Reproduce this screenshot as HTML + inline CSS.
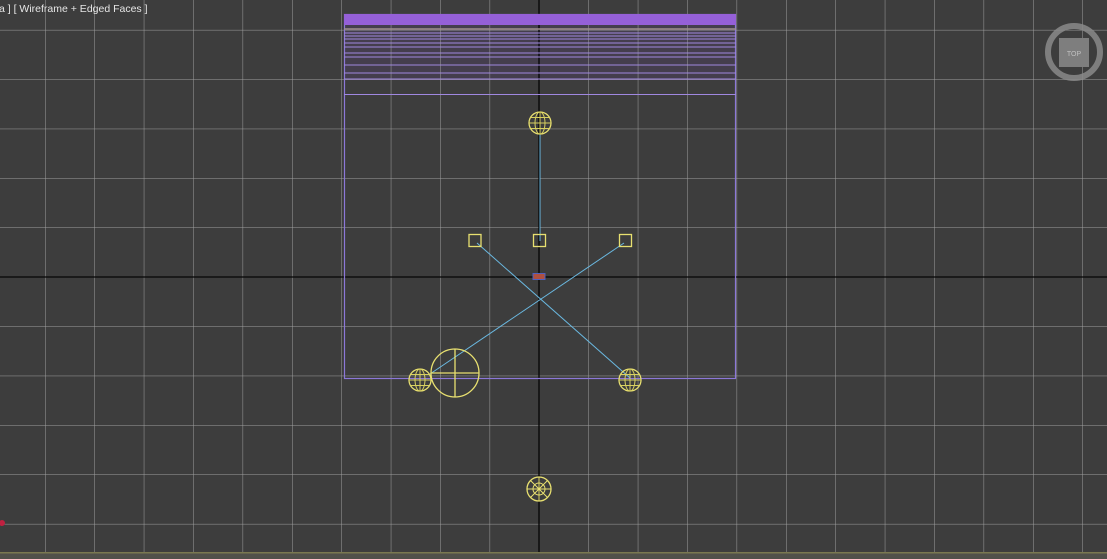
<!DOCTYPE html>
<html><head><style>
html,body{margin:0;padding:0;background:#3c3c3c;overflow:hidden;}
svg{display:block}
text{font-family:"Liberation Sans",sans-serif}
</style></head><body>
<svg width="1107" height="559" viewBox="0 0 1107 559" xmlns="http://www.w3.org/2000/svg">
<defs>
<pattern id="g" x="45" y="29.9" width="49.4" height="49.4" patternUnits="userSpaceOnUse">
<path d="M0 0V49.4M0 0H49.4" stroke="#a0a0a0" stroke-width="1" fill="none"/>
</pattern>
<g id="sph">
<circle r="11" fill="none" stroke="#e8e070" stroke-width="1.3"/>
<ellipse rx="5" ry="11" fill="none" stroke="#d8d060" stroke-width="1"/>
<path d="M0 -11V11M-11 0H11M-9.5 -5.5H9.5M-9.5 5.5H9.5" stroke="#d8d060" stroke-width="1"/>
</g>
</defs>
<rect width="1107" height="559" fill="#3d3d3d"/>
<rect x="344" y="25" width="392" height="55" fill="#4a4058" opacity="0.6"/>
<rect x="-4" y="0" width="1115" height="559" fill="url(#g)"/>
<path d="M539 0V559M0 277H1107" stroke="#050505" stroke-width="1.3"/>
<rect x="344.5" y="14.5" width="391" height="364" fill="none" stroke="#8c78d8" stroke-width="1.2"/>
<rect x="344" y="14" width="392" height="11" fill="#9560d8"/>
<g stroke="#a088e0" stroke-width="1">
<path d="M344 29H736M344 33H736M344 36H736M344 39H736M344 43H736M344 47H736M344 53H736M344 57H736M344 65H736M344 73H736M344 79H736M344 94.5H736"/>
</g>
<path d="M344 29H736" stroke="#a09090" stroke-width="1.5"/>
<g stroke="#6ab8e0" stroke-width="1">
<path d="M540 134V241M477 243L630 378M624 243L430 374"/>
</g>
<rect x="533" y="273.5" width="12" height="6" fill="#b05040" stroke="#5060c0" stroke-width="1"/>
<g fill="none" stroke="#e8e070" stroke-width="1.3">
<rect x="469" y="234.5" width="12" height="12"/>
<rect x="533.5" y="234.5" width="12" height="12"/>
<rect x="619.5" y="234.5" width="12" height="12"/>
<circle cx="455" cy="373" r="24"/>
<path d="M455 349V397M431 373H479"/>
</g>
<use href="#sph" x="540" y="123"/>
<use href="#sph" x="420" y="380"/>
<use href="#sph" x="630" y="380"/>
<g transform="translate(539,489)">
<circle r="12" fill="none" stroke="#e8e070" stroke-width="1.3"/>
<circle r="6" fill="none" stroke="#e8e070" stroke-width="1"/>
<path d="M-12 0H12M0 -12V12M-8.5 -8.5L8.5 8.5M8.5 -8.5L-8.5 8.5" stroke="#e8e070" stroke-width="1"/>
</g>
<circle cx="2" cy="523" r="3" fill="#c02040"/>
<rect x="0" y="552" width="1107" height="7" fill="#50504a"/>
<rect x="0" y="552" width="1107" height="1.5" fill="#7a7850"/>
<text x="-1" y="12" font-size="10.5" fill="#e6e6e6">a ] [ Wireframe + Edged Faces ]</text>
<g transform="translate(1074,52)">
<circle r="26" fill="none" stroke="#8a8a8a" stroke-width="6" opacity="0.85"/>
<rect x="-15" y="-14" width="30" height="29" fill="#7e7e7e"/>
<text x="0" y="4" font-size="7" fill="#c0c0c0" text-anchor="middle">TOP</text>
</g>
</svg>
</body></html>
